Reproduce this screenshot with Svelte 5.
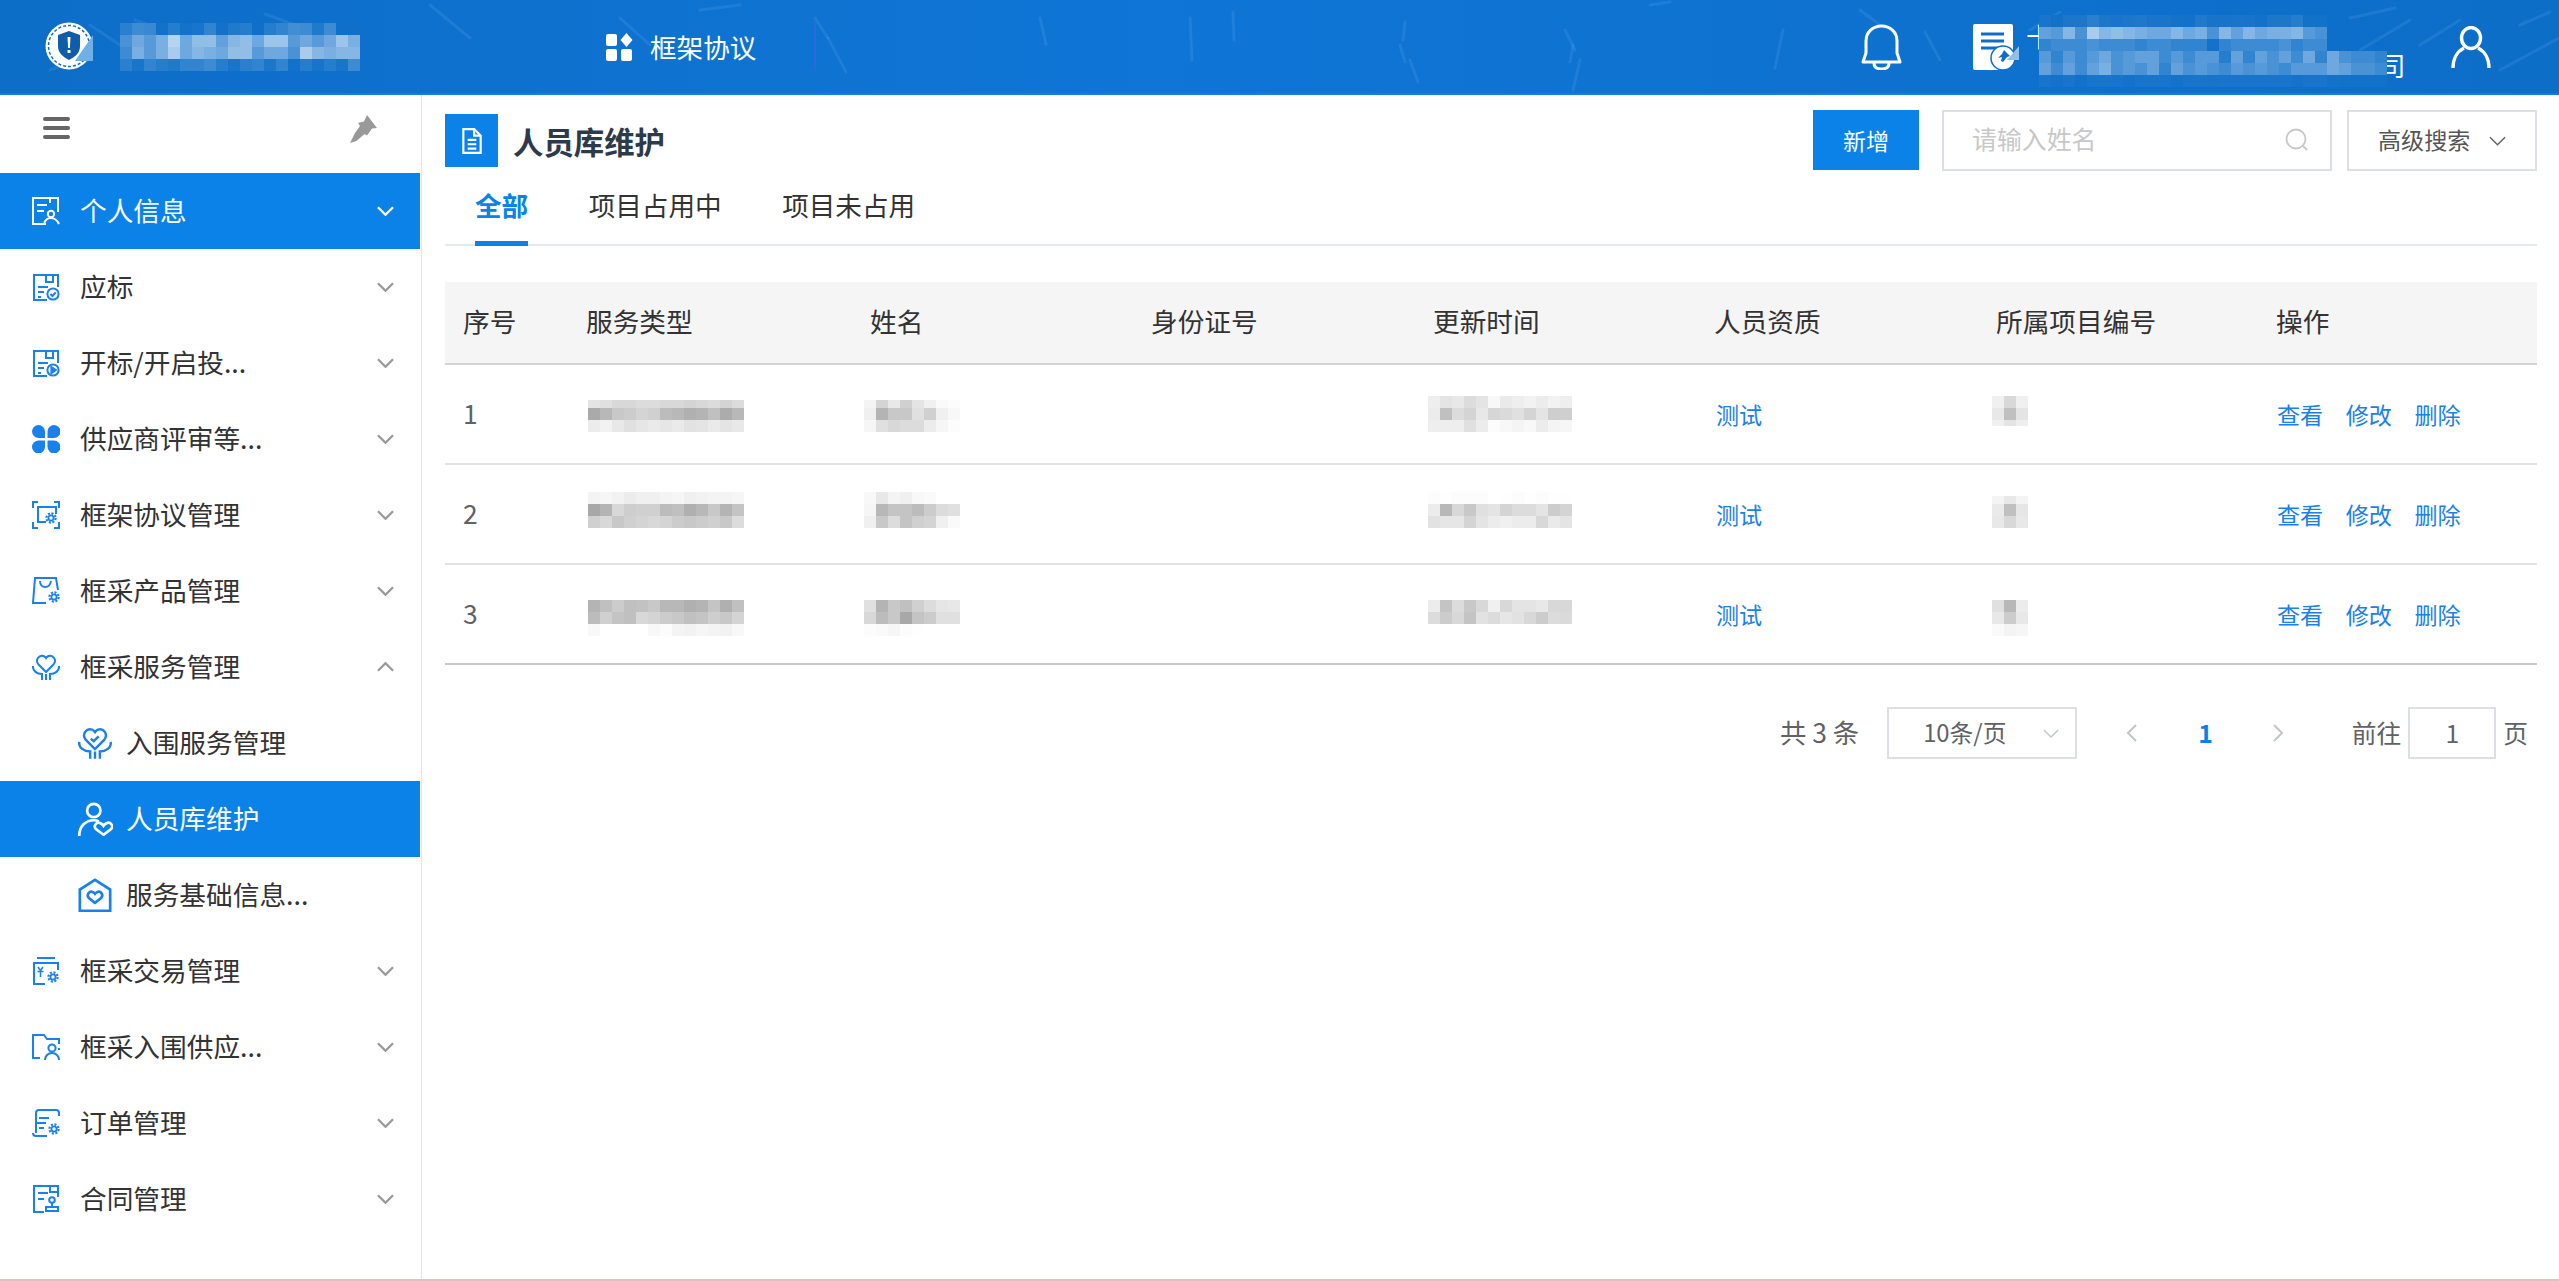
<script>
  const base = [13, 110, 200];
  // header mosaics are opaque so the clipped glyphs stay hidden behind them
  const tint = (a) => {
    const c = base.map((v) => Math.round(v + (255 - v) * a));
    return `rgb(${c[0]},${c[1]},${c[2]})`;
  };
  const grey = (v) => `rgb(${v},${v},${v})`;

  const titleBlur = [
    [.12,.2,.18,.02,.1,.03,.05,.15,.02,.08,.1,.01,.1,.15,.22,.2,.08,.2,.01,.01],
    [.25,.4,.3,.45,.7,.4,.55,.55,.35,.5,.55,.4,.6,.6,.3,.4,.3,.4,.6,.45],
    [.2,.45,.3,.45,.65,.4,.5,.45,.4,.55,.55,.3,.4,.4,.25,.65,.5,.45,.5,.5],
    [.12,.05,.15,.1,.08,.15,.15,.2,.1,.05,.12,.15,.06,.15,.02,.1,.04,.1,.05,.2]
  ];
  const companyBlur = [
    [.05,.02,.06,.06,.12,.06,.05,.06,.07,.05,.05,.03,.02,.08,.04,.04,.05,.04,.02,.06,.06,.1,.02,.02],
    [.35,.3,.5,.25,.65,.5,.55,.5,.45,.4,.4,.5,.4,.45,.25,.5,.35,.5,.4,.45,.45,.5,.3,.25],
    [.15,.2,.2,.2,.25,.2,.2,.2,.15,.2,.2,.15,.15,.15,.03,.15,.2,.2,.2,.2,.25,.15,.2,.2],
    [.3,.15,.3,.2,.3,.4,.25,.3,.35,.35,.2,.3,.2,.3,.3,.1,.35,.15,.35,.25,.35,.2,.4,.15,.4,.25,.2,.2,.15],
    [.35,.2,.35,.2,.35,.45,.25,.3,.25,.35,.15,.35,.25,.3,.25,.2,.3,.25,.3,.25,.2,.3,.3,.3,.4,.35,.25,.25,.2],
    [.05,.03,.05,.02,.05,.05,.05,.03,.05,.05,.05,.03,.05,.05,.04,.05,.05,.05,.05,.05,.05,.03,.05,.05,.03,.02,.02,.02,.02]
  ];

  const menu = [
    { label: '个人信息', icon: 'person', active: true, chev: 'down' },
    { label: '应标', icon: 'check', chev: 'down' },
    { label: '开标/开启投...', icon: 'play', chev: 'down' },
    { label: '供应商评审等...', icon: 'clover', chev: 'down' },
    { label: '框架协议管理', icon: 'frame', chev: 'down' },
    { label: '框采产品管理', icon: 'bag', chev: 'down' },
    { label: '框采服务管理', icon: 'hands', chev: 'up' },
    { label: '入围服务管理', icon: 'handscheck', sub: true },
    { label: '人员库维护', icon: 'staff', sub: true, active: true },
    { label: '服务基础信息...', icon: 'house', sub: true },
    { label: '框采交易管理', icon: 'yen', chev: 'down' },
    { label: '框采入围供应...', icon: 'folder', chev: 'down' },
    { label: '订单管理', icon: 'scroll', chev: 'down' },
    { label: '合同管理', icon: 'stamp', chev: 'down' }
  ];

  const columns = ['序号', '服务类型', '姓名', '身份证号', '更新时间', '人员资质', '所属项目编号', '操作'];

  const rows = [
    {
      no: 1,
      service: { top: 35, h: [8, 12, 12], cells: [
        [228,224,216,216,220,220,216,216,212,216,220,212,220],
        [170,184,200,204,212,208,188,184,176,180,192,172,184],
        [236,242,232,224,230,234,230,234,226,228,234,228,232]] },
      name: { top: 35, h: [8, 12, 12], cells: [
        [244,212,232,208,228,240,250,252],
        [240,180,200,200,224,208,240,248],
        [246,224,216,220,220,236,246,252]] },
      time: { top: 31, h: [12, 12, 12], cells: [
        [238,228,232,220,228,248,234,238,242,236,242,238],
        [236,192,220,212,232,214,218,224,212,228,206,207],
        [238,238,238,224,236,252,248,244,248,236,244,246]] },
      project: { top: 31, h: [12, 12, 6], cells: [[240,216,240],[232,192,228],[240,228,238]] }
    },
    {
      no: 2,
      service: { top: 27, h: [12, 12, 12], cells: [
        [244,246,242,236,240,240,244,246,240,242,244,244,246],
        [168,180,216,206,208,208,188,192,176,184,200,180,196],
        [208,216,200,208,212,216,212,204,200,204,208,200,220]] },
      name: { top: 27, h: [12, 12, 12], cells: [
        [248,232,244,240,248,250,255,255],
        [246,184,196,196,188,204,220,224],
        [240,200,220,196,208,212,240,250]] },
      time: { top: 27, h: [12, 12, 12], cells: [
        [252,254,252,252,252,255,254,252,254,252,254,254],
        [236,184,216,200,224,228,212,220,220,228,204,212],
        [226,230,230,212,228,236,240,236,236,216,234,228]] },
      project: { top: 31, h: [8, 12, 12], cells: [[244,232,244],[234,192,230],[232,216,232]] }
    },
    {
      no: 3,
      service: { top: 35, h: [12, 12, 12], cells: [
        [180,192,204,192,194,200,184,184,176,180,196,176,192],
        [188,208,196,192,216,212,204,200,192,196,206,200,212],
        [248,255,255,255,255,248,252,244,242,246,244,242,248]] },
      name: { top: 35, h: [12, 12, 12], cells: [
        [224,180,200,192,208,220,230,232],
        [216,188,200,168,196,204,224,224],
        [252,250,246,252,254,255,255,255]] },
      time: { top: 35, h: [12, 12], cells: [
        [236,196,220,200,216,240,216,228,228,232,216,216],
        [220,204,216,196,226,220,230,226,216,204,220,218]] },
      project: { top: 35, h: [12, 12, 12], cells: [[224,184,236],[232,204,232],[250,244,246]] }
    }
  ];

  const streaks = [
    [90,25,120,45],[135,20,185,38],[265,14,335,40],[430,5,470,38],[620,18,650,45],
    [815,18,828,38],[828,38,846,72],[1040,18,1046,44],[1190,18,1192,60],[1233,12,1234,40],
    [1400,45,1405,62],[1405,22,1403,40],[1410,60,1418,82],[1570,62,1573,45],[1573,90,1580,60],
    [1565,30,1575,50],[1775,68,1783,30],[1940,60,1925,32],[2000,50,1990,70],[1860,10,1880,25],
    [2350,18,2395,8],[2360,50,2410,20],[2420,45,2460,20],[2500,70,2559,38],[2030,30,2060,12],
    [2520,25,2550,12],[50,70,75,60],[700,10,740,5],[1650,5,1670,2]
  ];
</script>

{#snippet mosaic(cells, heights, colour)}
  <div class="mosaic">
    {#each cells as line, r}
      <div class="mosaic-row" style="height:{heights ? heights[r] : 12}px">
        {#each line as v}
          <i style="background:{colour(v)}"></i>
        {/each}
      </div>
    {/each}
  </div>
{/snippet}

{#snippet blur(m, left)}
  <div class="blur" style="margin-top:{m.top}px;margin-left:{left}px">
    {@render mosaic(m.cells, m.h, grey)}
  </div>
{/snippet}

{#snippet gear(x, y)}
  <circle cx={x} cy={y} r="2.6" stroke-width="1.8" />
  <circle cx={x} cy={y} r="4.6" stroke-width="2.2" stroke-dasharray="2 1.6" />
{/snippet}

{#snippet icon(name)}
  <svg viewBox="0 0 28 28" fill="none" stroke="currentColor" stroke-width="2">
    {#if name === 'person'}
      <path d="M14 27H1V1h25v14" />
      <path d="M5 8h10M5 14h7M18 2v4" />
      <circle cx="19" cy="17" r="3.2" />
      <path d="M12 27c1-4 4-6 7-6s6 2 8 6" />
    {:else if name === 'check' || name === 'play'}
      <path d="M15 27H2V2h24v12" />
      <path d="M14 2v7h7V2M6 14h10M6 19h6M6 24h3" />
      <circle cx="21" cy="21" r="5.6" />
      {#if name === 'check'}
        <path d="M18.4 21l2 2 3.4-3.6" />
      {:else}
        <path d="M19.4 18l4.4 3-4.4 3z" fill="currentColor" />
      {/if}
    {:else if name === 'clover'}
      <g fill="currentColor" stroke="none">
        <path d="M13 13H6.500A6.500 6.500 0 1 1 13 6.500z" />
        <path d="M15.500 13h6.500a6.500 6.500 0 1 0-6.500-6.500z" />
        <path d="M13 15.500H6.500A6.500 6.500 0 1 0 13 22z" />
        <path d="M15.500 15.500H22a6.500 6.500 0 1 1-6.500 6.500z" />
      </g>
    {:else if name === 'frame'}
      <path d="M1 7V1h5M22 1h5v6M1 21v6h5M22 27h5v-6" />
      <path d="M14 21H6V6h18v7" />
      {@render gear(19, 17)}
    {:else if name === 'bag'}
      <path d="M14 26H1L3 1h21l2 12" />
      <path d="M8 4c0 8 10 8 11 0" />
      {@render gear(22, 20)}
    {:else if name === 'hands' || name === 'handscheck'}
      <path d="M14 19l-7.500-7.500c-4-5 1-10 5-8.500 1 .4 2 1.200 2.500 2 .5-.8 1.500-1.600 2.500-2 4-1.500 9 3.500 5 8.500z" />
      <path d="M1 13c-.5 5 4 8 9 8v6M27 13c.5 5-4 8-9 8v6M14 21v6" />
      {#if name === 'handscheck'}
        <path d="M10.500 10.500l2.500 2 4-4" />
      {/if}
    {:else if name === 'staff'}
      <circle cx="13" cy="7" r="5.500" stroke-width="2.200" />
      <path d="M1 28c0-8 5-13 12-13 2 0 3 .3 4 1" stroke-width="2.200" />
      <path d="M21 27l-6-4.500c-3-3 .5-6.500 3.500-5 1 .5 2 1.200 2.500 2 .5-.8 1.500-1.500 2.500-2 3-1.500 6.500 2 3.500 5z" stroke-width="2.200" />
    {:else if name === 'house'}
      <path d="M1.500 27V9.500L14 1.500l12.500 8V27z" stroke-width="2.200" />
      <path d="M14 20.500l-5-4c-2.500-3 .5-6 3-5 .8.300 1.500.8 2 1.500.5-.7 1.200-1.200 2-1.500 2.500-1 5.500 2 3 5z" stroke-width="2.200" />
    {:else if name === 'yen'}
      <path d="M5 1h18M13 27H2V6h24v7" />
      <path d="M6 10l2.500 3.500L11 10M5.500 14.500h6M8.500 13.500V20" stroke-width="1.500" />
      {@render gear(21, 20)}
    {:else if name === 'folder'}
      <path d="M8 25H1V2h11l3 4h12v5M27 15v2" />
      <circle cx="20" cy="15" r="3.600" />
      <path d="M13 27c0-4 3-7 7-7s7 3 7 7" />
    {:else if name === 'scroll'}
      <path d="M4 24V4c0-2 1-3 3-3h17c2 0 3 1 3 3v3" />
      <path d="M1 24c0 2 1 3 3 3h11M5 14h9M7 9h10M7 19h5" />
      {@render gear(22, 20)}
    {:else if name === 'stamp'}
      <path d="M12 27H2V1h24v11" />
      <path d="M6 8h10M6 14h6M18 2v5h7" />
      <circle cx="20" cy="15" r="2.800" />
      <path d="M20 18v3M14 22h12v4H14z" />
    {/if}
  </svg>
{/snippet}

<div class="page">
  <header class="topbar">
    <svg class="streaks" viewBox="0 0 2559 95" fill="none" stroke="#8cc8ff" stroke-width="3" stroke-linecap="round">
      {#each streaks as [x1, y1, x2, y2]}
        <line {x1} {y1} {x2} {y2} stroke-opacity="0.13" />
      {/each}
      <line x1="815" y1="22" x2="815" y2="70" stroke="#3566e6" stroke-width="2" stroke-opacity="0.7" />
    </svg>

    <svg class="logo" viewBox="0 0 48 48">
      <circle cx="24" cy="24" r="23.500" fill="#fff" />
      <circle cx="24" cy="24" r="20.500" fill="none" stroke="#0d6ec8" stroke-width="1.500" stroke-dasharray="3 2" />
      <circle cx="24" cy="24" r="16.500" fill="#fff" />
      <path d="M24 9l11 4v11c0 7-5 11-11 14-6-3-11-7-11-14V13z" fill="#0f5ca8" />
      <path d="M22.500 15h3l-.6 11h-1.800zM22.500 28h3v3h-3z" fill="#fff" />
      <path d="M48 13v26H30z" fill="#6fb0e6" />
    </svg>
    <div class="title-blur">{@render mosaic(titleBlur, null, tint)}</div>

    <div class="module">
      <svg viewBox="0 0 27 28" fill="#fff">
        <rect x="0" y="1" width="11" height="12" rx="2" />
        <rect x="0" y="16" width="11" height="12" rx="2" />
        <rect x="15" y="16" width="11" height="12" rx="2" />
        <path d="M20.500 0l6 7-6 7-6-7z" />
      </svg>
      <span>框架协议</span>
    </div>

    <div class="top-right">
      <svg class="bell" viewBox="0 0 41 46" fill="none" stroke="#fff" stroke-width="3">
        <path d="M2 38l3-9V17C5 8 12 2 20.500 2S36 8 36 17v12l3 9z" stroke-linejoin="round" />
        <path d="M13 39c0 4 3 6 7.500 6s7.500-2 7.500-6" />
      </svg>
      <svg class="doc" viewBox="0 0 46 46">
        <path d="M2 0h36a2 2 0 0 1 2 2v26H28v18H2a2 2 0 0 1-2-2V2a2 2 0 0 1 2-2z" fill="#fff" />
        <path d="M8 10h23M8 17h23M8 24h23" stroke="#0d6ec8" stroke-width="3" />
        <circle cx="30" cy="34" r="12" fill="#fff" stroke="#0d6ec8" stroke-width="1.500" />
        <path d="M31 26l6 6-3 1-4 5-2-1 1-4-4 1 4-4z" fill="#0d6ec8" />
        <path d="M46 22v14H34z" fill="#8fc0ea" />
      </svg>
      <div class="company">
        <span class="cut-left">十</span>
        <span class="cut-right">司</span>
        <div class="company-blur">{@render mosaic(companyBlur, null, tint)}</div>
      </div>
      <svg class="user" viewBox="0 0 40 42" fill="none" stroke="#fff" stroke-width="3.400">
        <ellipse cx="20" cy="12" rx="9.500" ry="10.500" />
        <path d="M2 42c0-10 5-17 11-20M38 42c0-10-5-17-11-20" />
      </svg>
    </div>
  </header>

  <div class="body">
    <aside class="side">
      <div class="side-tools">
        <svg class="burger" viewBox="0 0 27 22" fill="#666">
          <rect y="0" width="27" height="4" rx="2" />
          <rect y="9" width="27" height="4" rx="2" />
          <rect y="18" width="27" height="4" rx="2" />
        </svg>
        <svg class="pin" viewBox="0 0 27 28" fill="#999">
          <path d="M17 0l10 13-5 .5-5 7-2.500-1.500-8 7L0 28l5-10 5-7-2-3 6-1.500z" />
        </svg>
      </div>
      <nav>
        {#each menu as item}
          <div class="item" class:sub={item.sub} class:active={item.active}>
            <span class="item-icon">{@render icon(item.icon)}</span>
            <span class="item-label">{item.label}</span>
            {#if item.chev}
              <svg class="chev" class:up={item.chev === 'up'} viewBox="0 0 18 10" fill="none" stroke="currentColor" stroke-width="2.400">
                <path d="M1 1l8 8 8-8" />
              </svg>
            {/if}
          </div>
        {/each}
      </nav>
    </aside>

    <main class="main">
      <div class="head">
        <div class="head-icon">
          <svg viewBox="0 0 18 24" fill="none" stroke="#fff" stroke-width="2">
            <path d="M1 1h10l6 6v16H1z" />
            <path d="M11 1v6h6M5 11h8M5 15h8M5 19h8" />
          </svg>
        </div>
        <h1>人员库维护</h1>
        <div class="actions">
          <button class="add">新增</button>
          <div class="search">
            <span>请输入姓名</span>
            <svg viewBox="0 0 24 24" fill="none" stroke="#c8c8c8" stroke-width="1.800">
              <circle cx="11" cy="11" r="9.500" />
              <path d="M18 18l4 4" />
            </svg>
          </div>
          <div class="advanced">
            <span>高级搜索</span>
            <svg viewBox="0 0 18 10" fill="none" stroke="#666" stroke-width="1.600"><path d="M1 1l8 8 8-8" /></svg>
          </div>
        </div>
      </div>

      <div class="tabs">
        <div class="tab on">全部</div>
        <div class="tab">项目占用中</div>
        <div class="tab">项目未占用</div>
      </div>

      <div class="table">
        <div class="tr th">
          {#each columns as c}
            <div class="cell">{c}</div>
          {/each}
        </div>
        {#each rows as row}
          <div class="tr">
            <div class="cell num">{row.no}</div>
            <div class="cell top">{@render blur(row.service, 2)}</div>
            <div class="cell top">{@render blur(row.name, -6)}</div>
            <div class="cell"></div>
            <div class="cell top">{@render blur(row.time, -5)}</div>
            <div class="cell"><a class="link test">测试</a></div>
            <div class="cell top">{@render blur(row.project, -4)}</div>
            <div class="cell ops">
              <a class="link">查看</a><a class="link">修改</a><a class="link">删除</a>
            </div>
          </div>
        {/each}
      </div>

      <div class="pager">
        <span class="total">共 3 条</span>
        <div class="size">
          <span>10条/页</span>
          <svg viewBox="0 0 18 10" fill="none" stroke="#c0c4cc" stroke-width="1.500"><path d="M1 1l8 8 8-8" /></svg>
        </div>
        <svg class="arrow" viewBox="0 0 11 18" fill="none" stroke="#c0c4cc" stroke-width="2"><path d="M10 1L2 9l8 8" /></svg>
        <span class="current">1</span>
        <svg class="arrow" viewBox="0 0 11 18" fill="none" stroke="#c0c4cc" stroke-width="2"><path d="M1 1l8 8-8 8" /></svg>
        <span class="goto">前往</span>
        <div class="jump">1</div>
        <span class="unit">页</span>
      </div>
    </main>
  </div>
</div>

<style>
  :global(body) {
    margin: 0;
    background: #fff;
  }

  .page {
    width: 2559px;
    height: 1281px;
    display: flex;
    flex-direction: column;
    overflow: hidden;
    font-family: "Noto Sans CJK SC", "Noto Sans", sans-serif;
    color: #333;
  }

  .mosaic-row {
    display: flex;
  }

  .mosaic-row i {
    display: block;
    width: 12px;
    height: 100%;
  }

  /* top bar */
  .topbar {
    position: relative;
    flex: none;
    box-sizing: border-box;
    height: 95px;
    display: flex;
    align-items: center;
    padding: 0 68px 0 45px;
    background: linear-gradient(90deg, #0d6ec8 0%, #0f75d6 45%, #0d6ec8 100%);
    border-bottom: 2px solid #0a80e8;
    color: #fff;
  }

  .streaks {
    position: absolute;
    left: 0;
    top: 0;
    width: 2559px;
    height: 95px;
  }

  .logo {
    position: relative;
    width: 48px;
    height: 48px;
    margin-top: -2px;
  }

  .title-blur {
    position: relative;
    margin-left: 27px;
    margin-top: 1px;
  }

  .module {
    position: relative;
    display: flex;
    align-items: center;
    margin-left: 246px;
    font-size: 26.6px;
  }

  .module svg {
    width: 27px;
    height: 28px;
    margin-right: 17px;
  }

  .top-right {
    position: relative;
    display: flex;
    align-items: center;
    margin-left: auto;
  }

  .bell {
    width: 41px;
    height: 46px;
    margin-right: 71px;
  }

  .doc {
    width: 46px;
    height: 46px;
    margin-right: 20px;
  }

  .company {
    position: relative;
    width: 362px;
    height: 60px;
    margin-right: 50px;
    margin-top: -4px;
  }

  .company-blur {
    position: absolute;
    left: 0;
    top: 0;
  }

  .cut-left,
  .cut-right {
    position: absolute;
    font-size: 26.4px;
    line-height: 26px;
  }

  .cut-left {
    left: -13px;
    top: 8px;
  }

  .cut-right {
    left: 340px;
    top: 37px;
  }

  .user {
    width: 40px;
    height: 42px;
  }

  /* side menu */
  .body {
    flex: 1;
    display: flex;
    min-height: 0;
    border-bottom: 2px solid #cfc9c4;
  }

  .side {
    flex: none;
    box-sizing: border-box;
    width: 422px;
    padding-right: 1px;
    border-right: 1px solid #e4e4e4;
  }

  .side-tools {
    height: 78px;
    box-sizing: border-box;
    display: flex;
    justify-content: space-between;
    padding: 22px 43px 0 43px;
  }

  .burger {
    width: 27px;
    height: 22px;
  }

  .pin {
    width: 27px;
    height: 28px;
    margin-top: -2px;
  }

  .item {
    height: 76px;
    box-sizing: border-box;
    display: flex;
    align-items: center;
    padding-left: 32px;
    font-size: 26.7px;
    color: #333;
  }

  .item-label {
    padding-bottom: 3px;
  }

  .item.active {
    background: #0b82e8;
    color: #fff;
  }

  .item.sub {
    padding-left: 77px;
  }

  .item-icon {
    display: flex;
    width: 28px;
    height: 28px;
    margin-right: 20px;
    color: #1a80ec;
  }

  .item.active .item-icon {
    color: #fff;
  }

  .item.sub .item-icon {
    width: 36px;
    height: 34px;
    margin-right: 13px;
  }

  .item-icon svg {
    width: 100%;
    height: 100%;
  }

  .chev {
    width: 17px;
    height: 10px;
    margin-left: auto;
    margin-right: 26px;
    color: #999;
  }

  .chev.up {
    transform: rotate(180deg);
  }

  .item.active .chev {
    color: #fff;
  }

  /* content */
  .main {
    flex: 1;
    min-width: 0;
    padding: 0 22px 0 23px;
  }

  .head {
    display: flex;
    height: 76px;
    box-sizing: border-box;
    padding-top: 15px;
  }

  .head-icon {
    width: 53px;
    height: 53px;
    margin-top: 4px;
    display: flex;
    align-items: center;
    justify-content: center;
    background: #0b82e8;
  }

  .head-icon svg {
    width: 20px;
    height: 26px;
  }

  h1 {
    margin: 0 0 0 15px;
    align-self: flex-start;
    font-size: 30.4px;
    font-weight: 700;
    line-height: 62px;
    color: #2c3a4a;
  }

  .actions {
    margin-left: auto;
    display: flex;
    height: 61px;
  }

  .add {
    width: 106px;
    height: 60px;
    padding: 0;
    border: 0;
    background: #0b82e8;
    color: #fff;
    font: inherit;
    font-size: 23.1px;
    margin-right: 23px;
  }

  .search {
    box-sizing: border-box;
    width: 390px;
    display: flex;
    align-items: center;
    justify-content: space-between;
    padding: 0 21px 0 28px;
    border: 2px solid #dcdfe6;
    color: #c8c8c8;
    font-size: 24.9px;
    margin-right: 15px;
  }

  .search span {
    padding-bottom: 6px;
  }

  .search svg {
    width: 24px;
    height: 24px;
    margin-bottom: 2px;
  }

  .advanced {
    box-sizing: border-box;
    width: 190px;
    display: flex;
    align-items: center;
    padding-left: 29px;
    border: 2px solid #dcdfe6;
    color: #555;
    font-size: 23.1px;
  }

  .advanced span {
    padding-bottom: 3px;
  }

  .advanced svg {
    width: 17px;
    height: 10px;
    margin-left: 19px;
  }

  .tabs {
    display: flex;
    gap: 60.5px;
    height: 75px;
    box-sizing: border-box;
    padding-left: 30px;
    border-bottom: 2px solid #e4e7ed;
  }

  .tab {
    box-sizing: border-box;
    height: 75px;
    display: flex;
    align-items: center;
    padding-bottom: 3px;
    border-bottom: 5px solid transparent;
    font-size: 26.6px;
    color: #333;
  }

  .tab.on {
    color: #0b82e8;
    font-weight: 700;
    border-bottom-color: #0b82e8;
  }

  .table {
    margin-top: 36px;
  }

  .tr {
    box-sizing: border-box;
    display: grid;
    grid-template-columns: 123px 284px 281px 282px 281px 282px 280px 279px;
    height: 100px;
    border-bottom: 2px solid #e2e2e2;
  }

  .tr:last-child {
    border-bottom-color: #c8c8c8;
  }

  .tr.th {
    height: 83px;
    background: #f5f5f5;
    border-bottom-color: #d4d4d4;
    font-size: 26.7px;
    color: #333;
  }

  .tr.th .cell {
    padding-bottom: 5px;
  }

  .cell {
    display: flex;
    align-items: center;
    padding-left: 18px;
    min-width: 0;
  }

  .cell.top {
    align-items: flex-start;
  }

  .cell.num {
    font-size: 26.4px;
    color: #606266;
    padding-bottom: 3px;
  }

  .link {
    font-size: 23.1px;
    color: #1a80ec;
  }

  .test {
    margin-left: 2px;
  }

  .ops {
    gap: 22.5px;
    padding-left: 19px;
  }

  .pager {
    display: flex;
    align-items: center;
    margin-top: 42px;
    height: 52px;
    justify-content: flex-end;
    padding-right: 9px;
    font-size: 24.75px;
    color: #606266;
  }

  .total,
  .current,
  .goto,
  .unit,
  .jump,
  .size span {
    padding-bottom: 3px;
  }

  .total {
    font-size: 26.4px;
  }

  .size {
    box-sizing: border-box;
    width: 190px;
    height: 52px;
    margin-left: 28px;
    display: flex;
    align-items: center;
    padding-left: 34px;
    border: 2px solid #dcdfe6;
    font-size: 23.8px;
  }

  .size svg {
    width: 16px;
    height: 9px;
    margin-left: 37px;
  }

  .arrow {
    width: 11px;
    height: 18px;
  }

  .size + .arrow {
    margin-left: 49px;
  }

  .current {
    margin: 0 60px 0 61px;
    color: #0b82e8;
    font-weight: 700;
  }

  .goto {
    margin-left: 68px;
  }

  .jump {
    box-sizing: border-box;
    width: 88px;
    height: 52px;
    margin-left: 7px;
    display: flex;
    align-items: center;
    justify-content: center;
    border: 2px solid #dcdfe6;
  }

  .unit {
    margin-left: 7px;
  }
</style>
